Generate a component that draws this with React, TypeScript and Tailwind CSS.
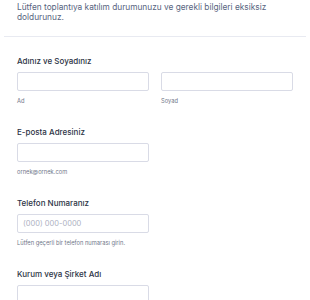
import React from "react";

const font = { fontFamily: "Inter, 'Noto Sans', sans-serif" };

function Field({
  label,
  children,
}: {
  label: string;
  children: React.ReactNode;
}) {
  return (
    <div className="flex flex-col">
      <div className="text-[8px] leading-[10px] font-medium text-[#2c3345]">{label}</div>
      <div className="mt-[6px]">{children}</div>
    </div>
  );
}

function Input({ placeholder }: { placeholder?: string }) {
  return (
    <div className="w-[132px] h-[19px] rounded-[2px] border border-[#d9dbe6] bg-white flex items-center px-[5px] text-[7.5px] text-[#adb1bf]">
      {placeholder}
    </div>
  );
}

function Sub({ children }: { children: React.ReactNode }) {
  return <div className="mt-[6px] text-[5.75px] leading-[7px] text-[#6f7689]">{children}</div>;
}

export default function App() {
  return (
    <div className="w-[310px] h-[300px] overflow-hidden bg-white" style={font}>
      <div className="px-[4px]">
        <div className="px-[13px] pt-[2px] pb-[14px]">
          <p className="w-[262px] text-[8.3px] leading-[10px] text-[#57647e]">
            Lütfen toplantıya katılım durumunuzu ve gerekli bilgileri eksiksiz doldurunuz.
          </p>
        </div>
        <div className="h-px bg-[#e8eaf1]" />
      </div>
      <div className="px-[17px] pt-[19px] flex flex-col gap-[23px]">
        <Field label="Adınız ve Soyadınız">
          <div className="flex gap-[12px]">
            <div>
              <Input />
              <Sub>Ad</Sub>
            </div>
            <div>
              <Input />
              <Sub>Soyad</Sub>
            </div>
          </div>
        </Field>
        <Field label="E-posta Adresiniz">
          <Input />
          <Sub>ornek@ornek.com</Sub>
        </Field>
        <Field label="Telefon Numaranız">
          <Input placeholder="(000) 000-0000" />
          <Sub>Lütfen geçerli bir telefon numarası girin.</Sub>
        </Field>
        <Field label="Kurum veya Şirket Adı">
          <Input />
        </Field>
      </div>
    </div>
  );
}
